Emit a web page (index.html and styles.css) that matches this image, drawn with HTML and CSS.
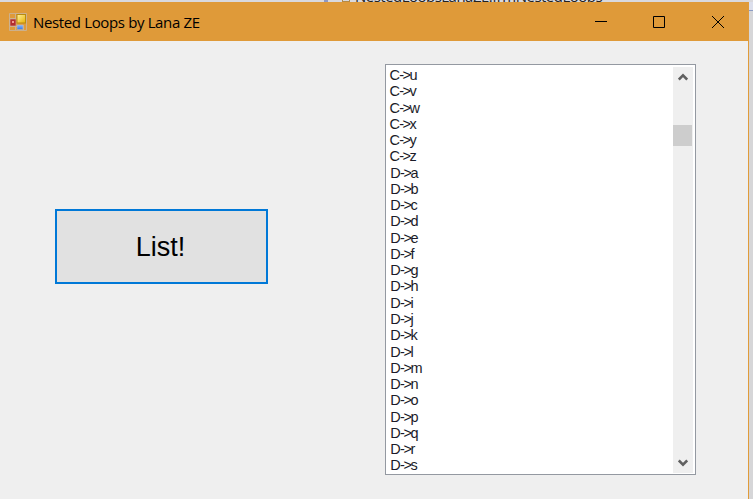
FILE: index.html
```
<!DOCTYPE html>
<html lang="en">
<head>
<meta charset="utf-8">
<title>Nested Loops by Lana ZE</title>
<link rel="stylesheet" href="styles.css">
</head>
<body>
<div class="backdrop"><i class="mark"></i><i class="glyph"></i><span class="behind">NestedLoopsLanaZE.frmNestedLoops</span></div>
<main class="window">
  <header class="titlebar">
    <svg class="app-icon" width="18" height="18" viewBox="0 0 18 18">
      <defs>
        <linearGradient id="y" x2="1" y2="1"><stop stop-color="#fff2a0"/><stop offset="1" stop-color="#e8b000"/></linearGradient>
        <linearGradient id="b" x2="0" y2="1"><stop stop-color="#8ab8ff"/><stop offset="1" stop-color="#3878e0"/></linearGradient>
      </defs>
      <path d="M.5 .5H17.5V17.5H.5ZM.5 5.5H7M.5 13.5H8M6.5 .5V17.5M14.5 12V17.5" fill="none" stroke="#ccb08c"/>
      <rect x="1" y="6" width="6" height="7" fill="#b52e2e" stroke="#cdb5a0" stroke-width=".6"/>
      <rect x="3" y="8" width="2" height="2" fill="#ef9a90"/>
      <rect x="8" y="1.5" width="8.5" height="8.5" fill="url(#y)" stroke="#b88a10"/>
      <rect x="8" y="12" width="6" height="4.5" fill="url(#b)" stroke="#c0b8b0" stroke-width=".6"/>
    </svg>
    <h1 class="title">Nested Loops by Lana ZE</h1>
    <svg class="controls" width="129" height="14" viewBox="0 0 129 14">
      <path d="M0 6.5H12M58.5 1.5H69.5V12.5H58.5ZM117 1L129 13M129 1L117 13" fill="none" stroke="#000"/>
    </svg>
  </header>
  <section class="client">
    <button class="list-button"><span>List!</span></button>
    <div class="listbox">
      <ul class="items">
        <li>C<b>-&gt;</b>u</li><li>C<b>-&gt;</b>v</li><li>C<b>-&gt;</b>w</li><li>C<b>-&gt;</b>x</li><li>C<b>-&gt;</b>y</li><li>C<b>-&gt;</b>z</li>
        <li class="d">D<b>-&gt;</b>a</li><li class="d">D<b>-&gt;</b>b</li><li class="d">D<b>-&gt;</b>c</li><li class="d">D<b>-&gt;</b>d</li><li class="d">D<b>-&gt;</b>e</li><li class="d">D<b>-&gt;</b>f</li><li class="d">D<b>-&gt;</b>g</li><li class="d">D<b>-&gt;</b>h</li><li class="d">D<b>-&gt;</b>i</li><li class="d">D<b>-&gt;</b>j</li><li class="d">D<b>-&gt;</b>k</li><li class="d">D<b>-&gt;</b>l</li><li class="d">D<b>-&gt;</b>m</li><li class="d">D<b>-&gt;</b>n</li><li class="d">D<b>-&gt;</b>o</li><li class="d">D<b>-&gt;</b>p</li><li class="d">D<b>-&gt;</b>q</li><li class="d">D<b>-&gt;</b>r</li><li class="d">D<b>-&gt;</b>s</li>
      </ul>
      <div class="scrollbar">
        <svg class="arrow" width="10" height="8" viewBox="0 0 10 8"><path d="M.8 6.5L5 2.3L9.2 6.5" fill="none" stroke="#606060" stroke-width="2.6"/></svg>
        <div class="thumb"></div>
        <svg class="arrow down" width="10" height="8" viewBox="0 0 10 8"><path d="M.8 1.5L5 5.7L9.2 1.5" fill="none" stroke="#606060" stroke-width="2.6"/></svg>
      </div>
    </div>
  </section>
</main>
</body>
</html>
```
FILE: styles.css
```
* { box-sizing: border-box; }
body {
  margin: 0;
  width: 753px;
  height: 499px;
  overflow: hidden;
  background: linear-gradient(#dcdfec 0 10px, #8c9cc4 10px 11px, #d6d6d8 11px);
  font-family: "Liberation Sans", Arial, sans-serif;
}
.backdrop {
  height: 2px;
  overflow: hidden;
  display: flex;
  background: #d9d9de;
}
.mark { width: 4px; height: 2px; margin-left: 324px; background: #8d98c4; }
.glyph { width: 8px; height: 2px; margin-left: 14px; border: solid #b58a45; border-width: 0 1px 1px; }
.behind {
  margin: -12px 0 0 5px;
  font: 15px/16px "Open Sans", sans-serif;
  letter-spacing: -.52px;
  white-space: nowrap;
  color: #222;
}
.window {
  width: 749px;
  height: 497px;
  display: flex;
  flex-direction: column;
  background: #efefef;
  border-right: 1px solid #e09b3a;
}
.titlebar {
  height: 39px;
  flex: none;
  display: flex;
  align-items: center;
  padding-left: 9px;
  background: #df9a39;
}
.app-icon { margin-top: 1px; }
.title {
  margin: 0 0 0 6px;
  font: 400 15px/20px "Open Sans", "Noto Sans", sans-serif;
  letter-spacing: -.36px;
  white-space: nowrap;
  color: #000;
}
.controls { margin: 1px 24px 0 auto; }
.client { flex: 1; display: flex; align-items: flex-start; }
.list-button {
  width: 213px;
  height: 75px;
  margin: 168px 0 0 55px;
  padding: 0 2px 0 0;
  border: 2px solid #0078d7;
  background: #e1e1e1;
  font: 27px/32px "Liberation Sans", Arial, sans-serif;
  color: #000;
}
.listbox {
  width: 311px;
  height: 411px;
  margin: 23px 0 0 117px;
  display: flex;
  border: 1.5px solid #9499a1;
  background: #fff;
}
.items {
  flex: 1;
  margin: 0;
  padding: 2px 0 0 3.5px;
  list-style: none;
  font-size: 14.5px;
  line-height: 16.27px;
  color: #1b1b28;
}
.items li { height: 16.27px; letter-spacing: -.7px; white-space: nowrap; }
.items .d { padding-left: .8px; }
.items b { font-weight: 400; letter-spacing: -1.5px; }
.scrollbar {
  width: 20px;
  margin: 2px 2px 1px 0;
  display: flex;
  flex-direction: column;
  align-items: center;
  background: #efefef;
}
.arrow { flex: none; margin-top: 6px; }
.thumb { flex: none; width: 19px; height: 21px; margin: 44px 1px 0 0; background: #cdcdcd; }
.down { margin: auto 0 6px; }
```
